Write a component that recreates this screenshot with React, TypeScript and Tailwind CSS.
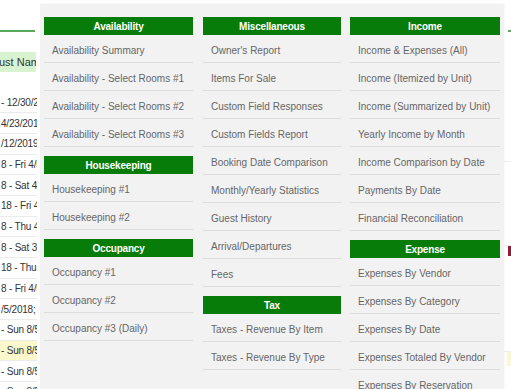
import React from "react";

const leftRows: { t: string; y?: boolean }[] = [
  { t: "- 12/30/2018" },
  { t: "4/23/2019" },
  { t: "/12/2019;" },
  { t: "8 - Fri 4/5" },
  { t: "8 - Sat 4/6" },
  { t: "18 - Fri 4/5" },
  { t: "8 - Thu 4/4" },
  { t: "8 - Sat 3/3" },
  { t: "18 - Thu 4" },
  { t: "8 - Fri 4/5" },
  { t: "/5/2018;" },
  { t: "- Sun 8/5" },
  { t: "- Sun 8/5", y: true },
  { t: "- Sun 8/5" },
  { t: "- Sun 8/5" },
];

type Section = { title: string; items: string[] };

const col1: Section[] = [
  {
    title: "Availability",
    items: [
      "Availability Summary",
      "Availability - Select Rooms #1",
      "Availability - Select Rooms #2",
      "Availability - Select Rooms #3",
    ],
  },
  { title: "Housekeeping", items: ["Housekeeping #1", "Housekeeping #2"] },
  {
    title: "Occupancy",
    items: ["Occupancy #1", "Occupancy #2", "Occupancy #3 (Daily)"],
  },
];

const col2: Section[] = [
  {
    title: "Miscellaneous",
    items: [
      "Owner's Report",
      "Items For Sale",
      "Custom Field Responses",
      "Custom Fields Report",
      "Booking Date Comparison",
      "Monthly/Yearly Statistics",
      "Guest History",
      "Arrival/Departures",
      "Fees",
    ],
  },
  {
    title: "Tax",
    items: ["Taxes - Revenue By Item", "Taxes - Revenue By Type"],
  },
];

const col3: Section[] = [
  {
    title: "Income",
    items: [
      "Income & Expenses (All)",
      "Income (Itemized by Unit)",
      "Income (Summarized by Unit)",
      "Yearly Income by Month",
      "Income Comparison by Date",
      "Payments By Date",
      "Financial Reconciliation",
    ],
  },
  {
    title: "Expense",
    items: [
      "Expenses By Vendor",
      "Expenses By Category",
      "Expenses By Date",
      "Expenses Totaled By Vendor",
      "Expenses By Reservation",
    ],
  },
];

function Column({ sections, w }: { sections: Section[]; w: string }) {
  return (
    <div className={`flex flex-col shrink-0 ${w}`}>
      {sections.map((s, i) => (
        <div key={s.title} className={`shrink-0 ${i > 0 ? "mt-[9px]" : ""}`}>
          <div className="h-[18px] bg-[#087c08] text-white font-bold text-[10px] tracking-[-0.2px] flex items-center justify-center">
            {s.title}
          </div>
          {s.items.map((it) => (
            <div
              key={it}
              className="h-[28px] flex items-center pl-[8px] pt-[3px] border-b border-[#dddddd] text-[10px] text-[#666666] whitespace-nowrap"
            >
              {it}
            </div>
          ))}
        </div>
      ))}
    </div>
  );
}

export default function App() {
  return (
    <div className="w-[511px] h-[389px] overflow-hidden bg-white flex font-['Liberation_Sans',Arial,sans-serif]">
      {/* left page table */}
      <div className="w-[40px] shrink-0 flex flex-col">
        <div className="h-[30px] shrink-0" />
        <div className="h-[2px] w-[35px] shrink-0 bg-[#5aa85a]" />
        <div className="h-[20px] shrink-0" />
        <div className="h-[20px] w-[36px] shrink-0 bg-[#d8f3cf] text-[#333] text-[11px] flex items-center overflow-hidden whitespace-nowrap">
          <span className="-ml-[1px]">ust Name</span>
        </div>
        <div className="h-[20.5px] shrink-0" />
        {leftRows.map((r, i) => (
          <div
            key={i}
            className={`h-[20.7px] w-[37px] shrink-0 overflow-hidden whitespace-nowrap text-[10px] tracking-[-0.2px] text-[#333] flex items-center border-b border-[#ebebeb] ${
              r.y ? "bg-[#fbf8cc]" : ""
            }`}
          >
            <span className="pl-[1px]">{r.t}</span>
          </div>
        ))}
      </div>

      {/* dropdown panel */}
      <div className="w-[463px] shrink-0 mt-[4px] bg-[#f2f2f2] pt-[13px] pl-[4px] pr-[3px] flex gap-[10px] shadow-[1px_0_2px_rgba(0,0,0,0.08)]">
        <Column sections={col1} w="w-[149px]" />
        <Column sections={col2} w="w-[138px]" />
        <div className="-ml-[1px]">
          <Column sections={col3} w="w-[150px]" />
        </div>
      </div>

      {/* right page strip */}
      <div className="flex-1 flex flex-col">
        <div className="h-[30px] shrink-0" />
        <div className="h-[2px] shrink-0 w-full ml-[5px] bg-[#5aa85a]" />
        <div className="h-[130px] shrink-0 border-b border-[#ececec]" />
        <div className="h-[84px] shrink-0 border-b border-[#ececec]" />
        <div className="h-[10px] shrink-0 w-full ml-[5px] bg-[#9b1535]" />
        <div className="h-[96px] shrink-0 border-b border-[#ececec]" />
        <div className="h-[14px] shrink-0 w-full ml-[4px] bg-[#fbf8cc]" />
      </div>
    </div>
  );
}
